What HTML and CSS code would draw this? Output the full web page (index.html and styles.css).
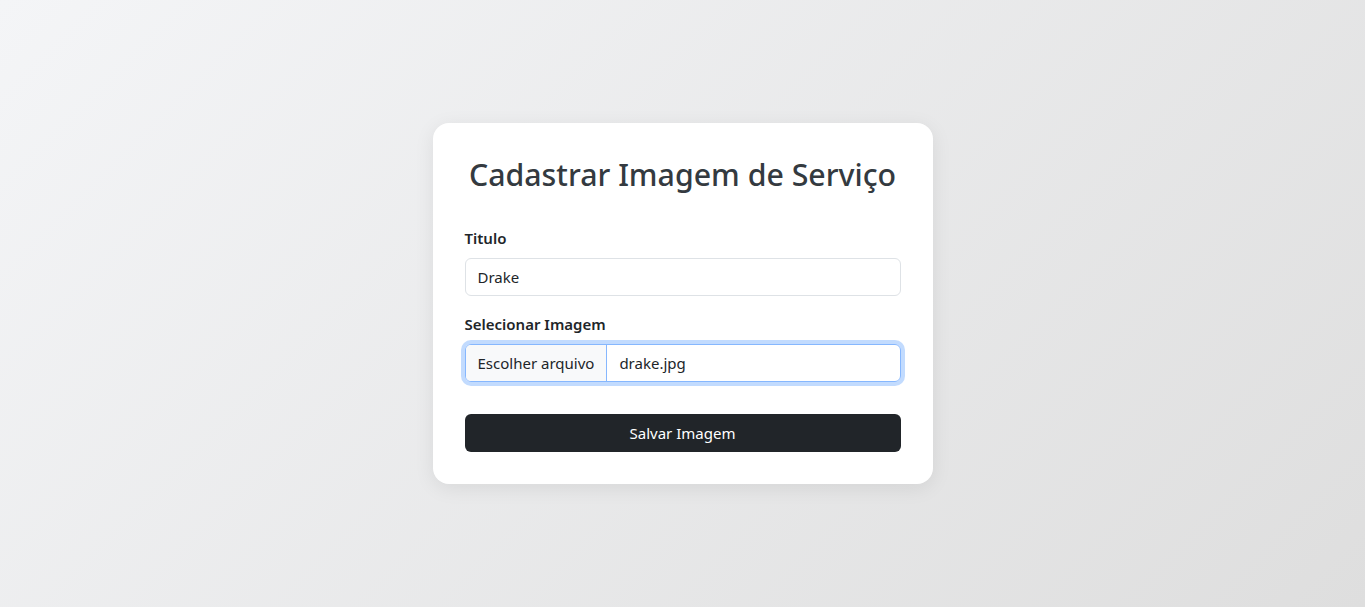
FILE: index.html
```html
<!DOCTYPE html>
<html lang="pt-BR">
<head>
<meta charset="utf-8">
<title>Cadastrar Imagem de Serviço</title>
<link rel="stylesheet" href="styles.css">
</head>
<body>
<main class="page">
  <form class="card">
    <h2 class="card-title">Cadastrar Imagem de Serviço</h2>
    <div class="field">
      <label class="label" for="titulo">Titulo</label>
      <input class="control" id="titulo" type="text" value="Drake">
    </div>
    <div class="field">
      <label class="label">Selecionar Imagem</label>
      <div class="file-control is-focused">
        <span class="file-button">Escolher arquivo</span>
        <span class="file-name">drake.jpg</span>
      </div>
    </div>
    <button class="btn-save" type="button">Salvar Imagem</button>
  </form>
</main>
</body>
</html>
```

FILE: styles.css
```css
* { box-sizing: border-box; }
html, body { margin: 0; height: 100%; }
body {
  font-family: "Noto Sans", "Open Sans", sans-serif;
  color: #212529;
  background: linear-gradient(135deg, #f4f5f7 0%, #dedede 100%);
}
.page {
  min-height: 607px;
  display: flex;
  align-items: center;
  justify-content: center;
}
.card {
  width: 500px;
  background: #fff;
  border-radius: 16px;
  padding: 32px;
  box-shadow: 0 4px 20px rgba(0,0,0,0.08);
  display: flex;
  flex-direction: column;
}
.card-title {
  margin: 0 0 32px;
  text-align: center;
  white-space: nowrap;
  font-size: 30.3px;
  font-weight: 500;
  line-height: 39px;
  color: #343a40;
}
.field { display: flex; flex-direction: column; margin-bottom: 16px; }
.label {
  font-size: 15px;
  font-weight: 600;
  line-height: 24px;
  margin-bottom: 8px;
}
.control {
  height: 38px;
  border: 1px solid #dee2e6;
  border-radius: 6px;
  padding: 6px 12px;
  font: inherit;
  font-size: 15px;
  color: #212529;
  outline: none;
}
.file-control {
  display: flex;
  height: 38px;
  border: 1px solid #dee2e6;
  border-radius: 6px;
  overflow: hidden;
  font-size: 15px;
}
.file-control.is-focused {
  border-color: #86b7fe;
  box-shadow: 0 0 0 4px rgba(13,110,253,0.25);
}
.file-button {
  display: flex;
  align-items: center;
  flex: 0 0 140px;
  padding: 0 12px;
  white-space: nowrap;
  background: #f8f9fa;
  border-right: 1px solid #86b7fe;
}
.file-name {
  display: flex;
  align-items: center;
  padding: 0 12px;
}
.btn-save {
  margin-top: 16px;
  height: 38px;
  border: 0;
  border-radius: 6px;
  background: #212529;
  color: #fff;
  font: inherit;
  font-size: 15px;
}
```
